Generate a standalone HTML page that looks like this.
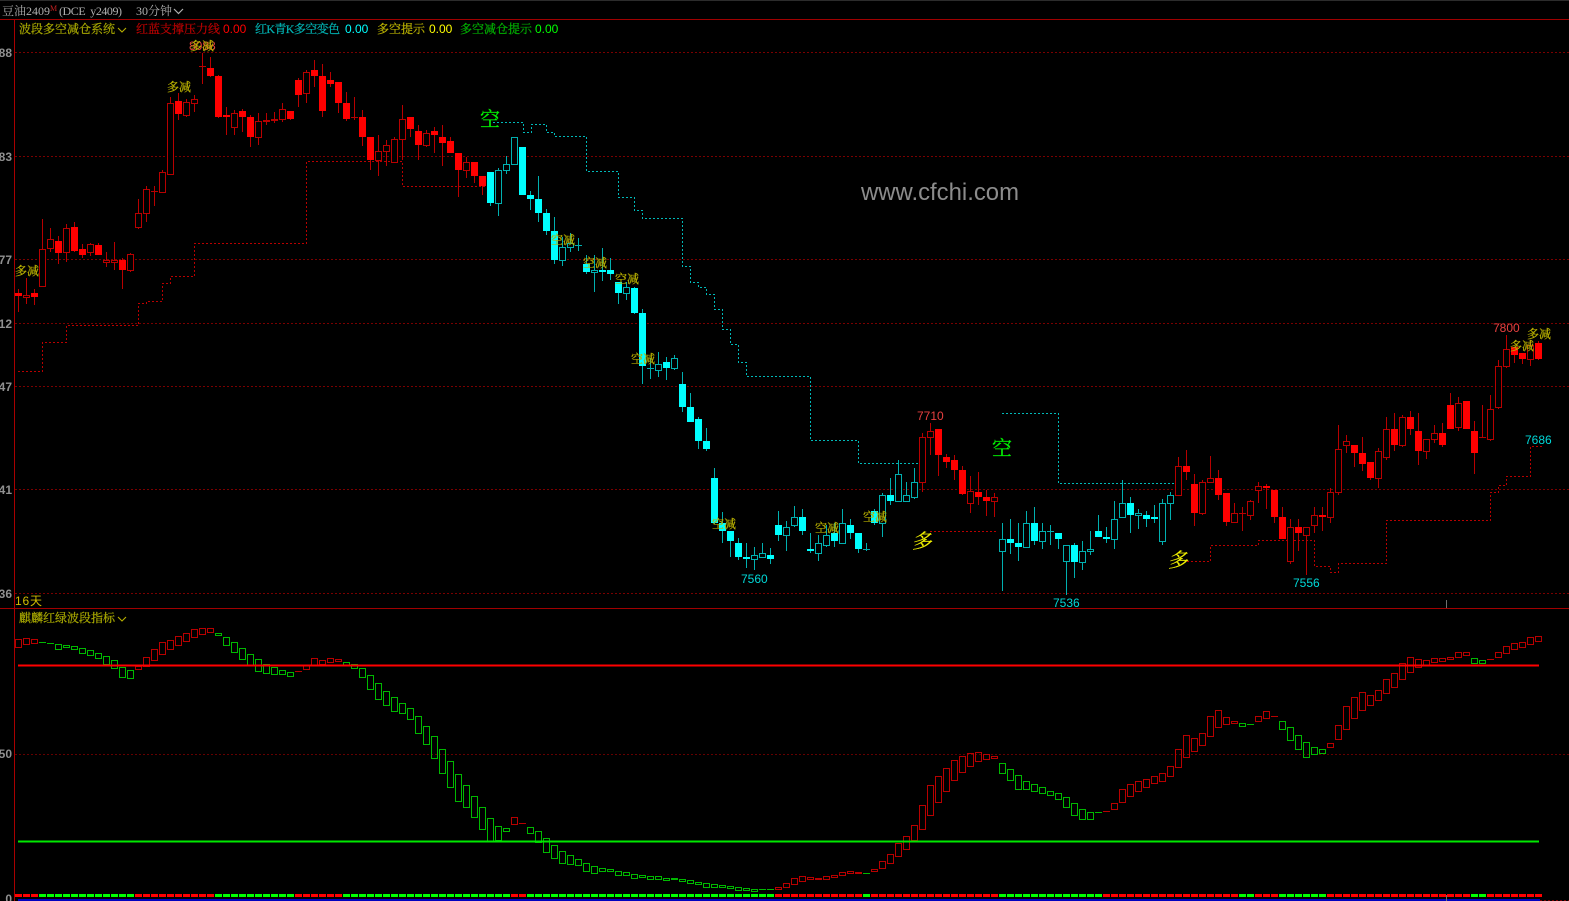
<!DOCTYPE html>
<html lang="zh">
<head>
<meta charset="utf-8">
<title>豆油2409</title>
<style>
html,body{margin:0;padding:0;background:#000;width:1569px;height:901px;overflow:hidden}
svg{display:block;filter:blur(.35px)}
text{font-family:"Liberation Serif","Noto Serif CJK SC",serif;font-size:12px}
.s{font-family:"Liberation Sans","Noto Sans CJK SC",sans-serif}
.ax{font-family:"Liberation Sans",sans-serif;font-size:12px;fill:#909090;font-weight:bold;text-anchor:end}
.j{fill:#b8b000;stroke:#b8b000;stroke-width:.25}
.n{font-family:"Liberation Sans",sans-serif;font-size:12px}
.h{stroke-width:.25}
</style>
</head>
<body>
<svg width="1569" height="901" viewBox="0 0 1569 901" xmlns="http://www.w3.org/2000/svg">
<rect width="1569" height="901" fill="#000"/>
<rect width="1569" height="1" fill="#2c2c2c"/>

<g shape-rendering="crispEdges" fill="none">
<path d="M15 52.5H1569M15 156.5H1569M15 259.5H1569M15 323.5H1569M15 386.5H1569M15 489.5H1569M15 593.5H1569" stroke="#7a0000" stroke-dasharray="2 2"/>
<path d="M15 754.5H1569" stroke="#640000" stroke-dasharray="2 2"/>
<path d="M0 19.5H1569M0 608.5H1569" stroke="#a00000"/>
<path d="M14.5 20V901" stroke="#a80000"/>

<!-- stop lines -->
<path d="M493 122.5H523.5V132.5H531.5V124.5H546.5V132.5H554.5V136.5H586.5V171.5H618.5V197.5H634.5V210.5H642.5V218.5H682.5V266.5H690.5V282.5H698.5V287.5H706.5V294.5H714.5V309.5H722.5V329.5H730.5V344.5H738.5V362.5H746.5V376.5H810.5V440.5H858.5V463.5H920M1002 413.5H1058.5V483.5H1176" stroke="#00b8b8" stroke-dasharray="2 2"/>
<path d="M18 371.5H42.5V342.5H66.5V325.5H138.5V303.5H146.5V301.5H162.5V283.5H170.5V276.5H194.5V243.5H306.5V161.5H402.5V186.5H486M930 531.5H998M1187 561.5H1210.5V545.5H1258.5V540.5H1314.5V566.5H1330.5V572.5H1338.5V563.5H1386.5V520.5H1490.5V492.5H1498.5V485.5H1506.5V476.5H1530.5V446.5H1544" stroke="#b80000" stroke-dasharray="2 2"/>

<!-- wicks -->
<path stroke="#b80000" d="M18.5 289V312M26.5 278V304M34.5 289V305M42.5 219V287M50.5 228V252M58.5 236V264M66.5 224V262M74.5 222V252M82.5 244V258M90.5 243V256M98.5 243V255M106.5 252V267M114.5 242V270M122.5 258V289M130.5 253V272M138.5 199V229M146.5 186V222M154.5 186V206M162.5 170V193M170.5 97V175M178.5 93V120M186.5 99V117M194.5 95V112M202.5 53V84M210.5 57V77M218.5 75V118M226.5 107V135M234.5 110V135M242.5 109V132M250.5 115V147M258.5 113V145M266.5 113V125M274.5 112V123M282.5 103V122M290.5 111V120M298.5 78V107M306.5 70V103M314.5 60V87M322.5 64V117M330.5 72V87M338.5 82V113M346.5 92V121M354.5 97V120M362.5 110V146M370.5 137V170M378.5 135V176M386.5 140V166M394.5 137V163M402.5 105V160M410.5 117V137M418.5 125V160M426.5 130V147M434.5 127V153M442.5 125V166M450.5 137V153M458.5 153V197M466.5 157V178M474.5 162V183M482.5 176V195M922.5 433V492M930.5 423V455M938.5 429V476M946.5 454V468M954.5 455V480M962.5 466V495M970.5 476V513M978.5 472V505M986.5 490V516M994.5 493V517M1178.5 457V495M1186.5 450V480M1194.5 474V526M1202.5 480V515M1210.5 456V482M1218.5 470V500M1226.5 493V526M1234.5 503V523M1242.5 507V531M1250.5 500V520M1258.5 482V503M1266.5 484V509M1274.5 490V523M1282.5 507V539M1290.5 519V564M1298.5 519V551M1306.5 527V575M1314.5 507V533M1322.5 507V531M1330.5 488V523M1338.5 425V495M1346.5 435V453M1354.5 445V467M1362.5 437V471M1370.5 462V480M1378.5 448V488M1386.5 417V460M1394.5 413V451M1402.5 415V447M1410.5 411V435M1418.5 413V465M1426.5 439V459M1434.5 425V443M1442.5 423V447M1450.5 393V429M1458.5 397V431M1474.5 421V474M1482.5 405V437M1490.5 395V441M1498.5 360V409M1506.5 335V368M1514.5 347V363M1522.5 353V364M1530.5 340V366M1538.5 341V360M199 66.5h7M151 191.5h7M351 117.5h7M1239 513.5h7M1479 437.5h7"/>
<path stroke="#00b0b0" d="M490.5 172V206M498.5 168V216M506.5 156V174M514.5 137V164M522.5 147V195M530.5 191V210M538.5 176V222M546.5 209V235M554.5 217V264M562.5 237V266M570.5 233V252M578.5 238V251M586.5 255V274M594.5 255V292M602.5 248V281M610.5 258V280M618.5 282V304M626.5 282V300M634.5 287V314M642.5 309V384M650.5 358V379M658.5 352V377M666.5 357V380M674.5 355V370M682.5 372V412M690.5 393V422M698.5 417V449M706.5 428V451M714.5 468V524M722.5 512V543M730.5 531V557M738.5 538V560M746.5 543V568M754.5 547V570M762.5 543V558M770.5 548V564M778.5 511V541M786.5 521V551M794.5 506V527M802.5 509V535M810.5 533V553M818.5 535V561M826.5 525V547M834.5 523V547M842.5 509V543M850.5 519V539M858.5 533V553M866.5 543V551M874.5 509V525M882.5 493V537M890.5 478V505M898.5 460V501M906.5 482V501M914.5 468V499M1002.5 523V591M1010.5 519V554M1018.5 523V561M1026.5 511V547M1034.5 507V545M1042.5 523V549M1050.5 525V545M1058.5 533V549M1066.5 545V595M1074.5 543V578M1082.5 541V570M1090.5 531V555M1098.5 515V537M1106.5 527V543M1114.5 501V549M1122.5 480V517M1130.5 497V533M1138.5 509V529M1146.5 511V527M1154.5 505V523M1162.5 499V545M1170.5 492V520M575 245.5h7M647 368.5h7M863 549.5h7M1047 531.5h7"/>

<!-- hollow candles -->
<path fill="#000" stroke="#b80000" d="M23.5 295.5h6v2h-6zM39.5 249.5h6v37h-6zM47.5 239.5h6v9h-6zM63.5 228.5h6v24h-6zM87.5 244.5h6v8h-6zM103.5 260.5h6v2h-6zM111.5 260.5h6v2h-6zM127.5 254.5h6v16h-6zM135.5 213.5h6v14h-6zM143.5 189.5h6v24h-6zM159.5 172.5h6v20h-6zM167.5 103.5h6v71h-6zM183.5 102.5h6v13h-6zM191.5 99.5h6v4h-6zM231.5 113.5h6v14h-6zM255.5 121.5h6v16h-6zM263.5 120.5h6v1h-6zM271.5 119.5h6v1h-6zM279.5 109.5h6v10h-6zM303.5 72.5h6v21h-6zM375.5 151.5h6v9h-6zM383.5 145.5h6v6h-6zM391.5 139.5h6v23h-6zM399.5 119.5h6v20h-6zM423.5 133.5h6v12h-6zM463.5 162.5h6v8h-6zM919.5 437.5h6v45h-6zM927.5 431.5h6v6h-6zM967.5 491.5h6v12h-6zM991.5 497.5h6v4h-6zM1175.5 466.5h6v29h-6zM1199.5 482.5h6v31h-6zM1207.5 478.5h6v4h-6zM1231.5 513.5h6v9h-6zM1247.5 501.5h6v14h-6zM1255.5 486.5h6v4h-6zM1287.5 527.5h6v34h-6zM1303.5 527.5h6v8h-6zM1311.5 515.5h6v10h-6zM1327.5 492.5h6v25h-6zM1335.5 449.5h6v43h-6zM1343.5 441.5h6v4h-6zM1375.5 451.5h6v27h-6zM1383.5 429.5h6v28h-6zM1399.5 417.5h6v28h-6zM1423.5 439.5h6v12h-6zM1431.5 433.5h6v6h-6zM1455.5 403.5h6v24h-6zM1487.5 409.5h6v30h-6zM1495.5 366.5h6v41h-6zM1503.5 349.5h6v17h-6zM1527.5 345.5h6v14h-6z"/>
<path fill="#000" stroke="#00b0b0" d="M495.5 170.5h6v33h-6zM503.5 164.5h6v6h-6zM511.5 137.5h6v27h-6zM559.5 247.5h6v13h-6zM567.5 243.5h6v4h-6zM591.5 270.5h6v2h-6zM623.5 287.5h6v6h-6zM655.5 364.5h6v6h-6zM671.5 358.5h6v10h-6zM751.5 555.5h6v4h-6zM759.5 553.5h6v4h-6zM783.5 527.5h6v8h-6zM791.5 517.5h6v8h-6zM815.5 543.5h6v10h-6zM823.5 535.5h6v10h-6zM839.5 523.5h6v20h-6zM879.5 495.5h6v28h-6zM895.5 474.5h6v27h-6zM903.5 495.5h6v6h-6zM911.5 482.5h6v15h-6zM999.5 539.5h6v12h-6zM1023.5 523.5h6v24h-6zM1039.5 531.5h6v10h-6zM1063.5 545.5h6v16h-6zM1079.5 551.5h6v11h-6zM1087.5 549.5h6v2h-6zM1111.5 519.5h6v20h-6zM1119.5 503.5h6v14h-6zM1135.5 513.5h6v2h-6zM1159.5 503.5h6v38h-6zM1167.5 495.5h6v8h-6z"/>

<!-- filled candles -->
<path fill="#ff0000" d="M15 293h7v3h-7zM31 293h7v4h-7zM55 241h7v12h-7zM71 227h7v24h-7zM79 249h7v6h-7zM95 245h7v10h-7zM119 260h7v10h-7zM175 101h7v13h-7zM207 68h7v8h-7zM215 76h7v41h-7zM223 115h7v2h-7zM239 111h7v6h-7zM247 117h7v20h-7zM287 111h7v8h-7zM295 80h7v15h-7zM311 70h7v6h-7zM319 76h7v35h-7zM327 80h7v4h-7zM335 82h7v21h-7zM343 103h7v16h-7zM359 117h7v20h-7zM367 137h7v23h-7zM407 117h7v12h-7zM415 131h7v14h-7zM431 131h7v4h-7zM439 137h7v6h-7zM447 141h7v12h-7zM455 153h7v17h-7zM471 162h7v14h-7zM479 176h7v10h-7zM935 429h7v26h-7zM943 457h7v5h-7zM951 460h7v10h-7zM959 470h7v24h-7zM975 492h7v5h-7zM983 497h7v4h-7zM1183 466h7v6h-7zM1191 484h7v29h-7zM1215 478h7v17h-7zM1223 493h7v29h-7zM1263 486h7v2h-7zM1271 490h7v27h-7zM1279 517h7v22h-7zM1295 527h7v6h-7zM1319 515h7v2h-7zM1351 445h7v8h-7zM1359 453h7v11h-7zM1367 462h7v16h-7zM1391 429h7v16h-7zM1407 417h7v12h-7zM1415 431h7v20h-7zM1439 433h7v12h-7zM1447 405h7v24h-7zM1463 401h7v28h-7zM1471 431h7v22h-7zM1511 347h7v8h-7zM1519 353h7v6h-7zM1535 343h7v16h-7z"/>
<path fill="#00ffff" d="M487 172h7v31h-7zM519 147h7v48h-7zM527 195h7v4h-7zM535 199h7v14h-7zM543 213h7v18h-7zM551 231h7v29h-7zM583 264h7v8h-7zM599 270h7v2h-7zM607 270h7v4h-7zM615 282h7v11h-7zM631 288h7v25h-7zM639 313h7v53h-7zM663 362h7v6h-7zM679 384h7v23h-7zM687 407h7v15h-7zM695 419h7v22h-7zM703 441h7v8h-7zM711 478h7v45h-7zM719 523h7v8h-7zM727 531h7v10h-7zM735 543h7v14h-7zM743 557h7v2h-7zM767 555h7v4h-7zM775 525h7v10h-7zM799 517h7v14h-7zM807 549h7v2h-7zM831 533h7v8h-7zM847 525h7v8h-7zM855 533h7v16h-7zM871 511h7v12h-7zM887 495h7v6h-7zM1007 539h7v4h-7zM1015 543h7v4h-7zM1031 523h7v18h-7zM1055 533h7v6h-7zM1071 545h7v17h-7zM1095 531h7v6h-7zM1103 537h7v2h-7zM1127 503h7v12h-7zM1143 515h7v4h-7zM1151 517h7v2h-7z"/>

<!-- lower panel boxes -->
<path stroke="#b80000" d="M15.5 639.5h6v8h-6zM23.5 638.5h6v6h-6zM31.5 639.5h6v4h-6zM135.5 666.5h6v3h-6zM143.5 657.5h6v9h-6zM151.5 649.5h6v11h-6zM159.5 642.5h6v12h-6zM167.5 640.5h6v9h-6zM175.5 636.5h6v9h-6zM183.5 633.5h6v8h-6zM191.5 629.5h6v8h-6zM199.5 628.5h6v6h-6zM207.5 628.5h6v4h-6zM295 671.5h7M303.5 665.5h6v4h-6zM311.5 658.5h6v7h-6zM319.5 660.5h6v4h-6zM327.5 658.5h6v4h-6zM335.5 659.5h6v2h-6zM511.5 817.5h6v7h-6zM519 823.5h7M775.5 887.5h6v2h-6zM783.5 883.5h6v4h-6zM791.5 878.5h6v6h-6zM799.5 876.5h6v5h-6zM807.5 877.5h6v2h-6zM815.5 878.5h6v1h-6zM823.5 876.5h6v3h-6zM831.5 875.5h6v2h-6zM839.5 872.5h6v3h-6zM847.5 871.5h6v2h-6zM855.5 872.5h6v1h-6zM871.5 869.5h6v2h-6zM879.5 861.5h6v7h-6zM887.5 854.5h6v9h-6zM895.5 843.5h6v13h-6zM903.5 836.5h6v13h-6zM911.5 825.5h6v15h-6zM919.5 805.5h6v24h-6zM927.5 785.5h6v30h-6zM935.5 776.5h6v26h-6zM943.5 768.5h6v23h-6zM951.5 760.5h6v20h-6zM959.5 756.5h6v16h-6zM967.5 753.5h6v13h-6zM975.5 752.5h6v9h-6zM983.5 754.5h6v5h-6zM991.5 756.5h6v2h-6zM1103 811.5h7M1111.5 803.5h6v6h-6zM1119.5 789.5h6v13h-6zM1127.5 784.5h6v12h-6zM1135.5 781.5h6v10h-6zM1143.5 779.5h6v8h-6zM1151.5 776.5h6v7h-6zM1159.5 773.5h6v8h-6zM1167.5 766.5h6v10h-6zM1175.5 749.5h6v18h-6zM1183.5 735.5h6v22h-6zM1191.5 738.5h6v13h-6zM1199.5 733.5h6v12h-6zM1207.5 716.5h6v20h-6zM1215.5 710.5h6v17h-6zM1223.5 717.5h6v7h-6zM1231.5 721.5h6v2h-6zM1255.5 716.5h6v5h-6zM1263.5 711.5h6v7h-6zM1271 716.5h7M1327.5 743.5h6v4h-6zM1335.5 725.5h6v14h-6zM1343.5 706.5h6v23h-6zM1351.5 697.5h6v21h-6zM1359.5 692.5h6v18h-6zM1367.5 695.5h6v10h-6zM1375.5 690.5h6v10h-6zM1383.5 679.5h6v14h-6zM1391.5 673.5h6v14h-6zM1399.5 663.5h6v16h-6zM1407.5 657.5h6v15h-6zM1415.5 659.5h6v8h-6zM1423.5 660.5h6v5h-6zM1431.5 658.5h6v4h-6zM1439.5 658.5h6v3h-6zM1447.5 657.5h6v2h-6zM1455.5 652.5h6v5h-6zM1463.5 652.5h6v3h-6zM1487 659.5h7M1495.5 652.5h6v5h-6zM1503.5 646.5h6v7h-6zM1511.5 643.5h6v6h-6zM1519.5 642.5h6v5h-6zM1527.5 637.5h6v7h-6zM1535.5 636.5h6v5h-6z"/>
<path stroke="#00b800" d="M39 642.5h7M47 643.5h7M55.5 644.5h6v5h-6zM63.5 645.5h6v2h-6zM71.5 646.5h6v3h-6zM79.5 648.5h6v5h-6zM87.5 650.5h6v5h-6zM95.5 653.5h6v5h-6zM103.5 656.5h6v8h-6zM111.5 660.5h6v8h-6zM119.5 667.5h6v10h-6zM127.5 670.5h6v8h-6zM215.5 633.5h6v2h-6zM223.5 637.5h6v8h-6zM231.5 642.5h6v10h-6zM239.5 648.5h6v11h-6zM247.5 654.5h6v11h-6zM255.5 659.5h6v12h-6zM263.5 664.5h6v9h-6zM271.5 667.5h6v7h-6zM279.5 670.5h6v4h-6zM287.5 672.5h6v4h-6zM343.5 662.5h6v3h-6zM351.5 664.5h6v4h-6zM359.5 668.5h6v9h-6zM367.5 675.5h6v14h-6zM375.5 683.5h6v16h-6zM383.5 691.5h6v14h-6zM391.5 697.5h6v14h-6zM399.5 703.5h6v10h-6zM407.5 708.5h6v11h-6zM415.5 716.5h6v17h-6zM423.5 726.5h6v18h-6zM431.5 736.5h6v22h-6zM439.5 749.5h6v24h-6zM447.5 761.5h6v26h-6zM455.5 774.5h6v27h-6zM463.5 785.5h6v22h-6zM471.5 796.5h6v21h-6zM479.5 807.5h6v22h-6zM487.5 818.5h6v23h-6zM495.5 826.5h6v14h-6zM503.5 828.5h6v3h-6zM527.5 827.5h6v6h-6zM535.5 831.5h6v11h-6zM543.5 838.5h6v14h-6zM551.5 845.5h6v13h-6zM559.5 851.5h6v12h-6zM567.5 855.5h6v9h-6zM575.5 859.5h6v6h-6zM583.5 863.5h6v8h-6zM591.5 866.5h6v7h-6zM599.5 868.5h6v3h-6zM607.5 869.5h6v2h-6zM615.5 871.5h6v4h-6zM623.5 872.5h6v3h-6zM631.5 874.5h6v4h-6zM639.5 875.5h6v2h-6zM647.5 876.5h6v3h-6zM655.5 876.5h6v3h-6zM663.5 878.5h6v2h-6zM671.5 878.5h6v1h-6zM679.5 879.5h6v2h-6zM687.5 880.5h6v3h-6zM695.5 882.5h6v2h-6zM703.5 883.5h6v4h-6zM711.5 884.5h6v3h-6zM719.5 885.5h6v2h-6zM727.5 886.5h6v2h-6zM735.5 887.5h6v3h-6zM743.5 888.5h6v2h-6zM751.5 889.5h6v2h-6zM759 889.5h7M767 889.5h7M863 873.5h7M999.5 763.5h6v10h-6zM1007.5 769.5h6v11h-6zM1015.5 775.5h6v14h-6zM1023.5 781.5h6v8h-6zM1031.5 784.5h6v7h-6zM1039.5 787.5h6v6h-6zM1047.5 791.5h6v4h-6zM1055.5 793.5h6v6h-6zM1063.5 797.5h6v10h-6zM1071.5 803.5h6v12h-6zM1079.5 809.5h6v10h-6zM1087.5 812.5h6v7h-6zM1095 812.5h7M1239.5 723.5h6v3h-6zM1247 724.5h7M1279.5 721.5h6v8h-6zM1287.5 727.5h6v13h-6zM1295.5 735.5h6v14h-6zM1303.5 742.5h6v15h-6zM1311.5 747.5h6v7h-6zM1319.5 749.5h6v4h-6zM1471.5 658.5h6v5h-6zM1479.5 660.5h6v3h-6z"/>

<!-- indicator horizontal lines -->
<rect x="18" y="664.5" width="1521" height="2" fill="#ff0000" stroke="none"/>
<rect x="18" y="840.5" width="1521" height="2" fill="#00e800" stroke="none"/>

<!-- bottom strip -->
<path stroke="#ff0000" stroke-width="3" stroke-dasharray="7 1" d="M15 895.5h24M135 895.5h80M295 895.5h48M511 895.5h16M775 895.5h88M871 895.5h128M1103 895.5h136M1255 895.5h24M1327 895.5h144M1487 895.5h56"/>
<path stroke="#00ff00" stroke-width="3" stroke-dasharray="7 1" d="M39 895.5h96M215 895.5h80M343 895.5h168M527 895.5h248M863 895.5h8M999 895.5h104M1239 895.5h16M1279 895.5h48M1471 895.5h16"/>
<rect x="18" y="899" width="1522" height="2" fill="#0000c0" stroke="none"/>
<path d="M1540 900.5H1569" stroke="#7a0000" stroke-dasharray="2 2"/>
<path d="M1446.5 600V608M1446.5 895V901" stroke="#707070"/>
</g>

<!-- header -->
<text x="2" y="15" fill="#b0b0b0">豆油</text>
<text x="26" y="15" fill="#b0b0b0" textLength="24" lengthAdjust="spacingAndGlyphs">2409</text>
<text x="50" y="11" fill="#c02020" style="font-size:8px">M</text>
<text x="59" y="15" fill="#b0b0b0" textLength="63" lengthAdjust="spacing" xml:space="preserve">(DCE  y2409)</text>
<text x="136" y="15" fill="#b0b0b0">30分钟</text>
<path d="M174 9l4.5 4.5 4.5-4.5" fill="none" stroke="#b0b0b0" stroke-width="1.2"/>

<!-- legend -->
<text x="19" y="33" class="h" fill="#a8a800" stroke="#a8a800">波段多空减仓系统</text>
<path d="M118 28l4 4 4-4" fill="none" stroke="#b8b000" stroke-width="1.1"/>
<text x="136" y="33" class="h" fill="#b80000" stroke="#b80000">红蓝支撑压力线</text>
<text x="223" y="33" class="n" fill="#ff0000">0.00</text>
<text x="255" y="33" class="h" fill="#00b0b0" stroke="#00b0b0" textLength="85" lengthAdjust="spacing">红K青K多空变色</text>
<text x="345" y="33" class="n" fill="#00ffff">0.00</text>
<text x="377" y="33" class="h" fill="#b8b000" stroke="#b8b000">多空提示</text>
<text x="429" y="33" class="n" fill="#ffff00">0.00</text>
<text x="460" y="33" class="h" fill="#00b000" stroke="#00b000">多空减仓提示</text>
<text x="535" y="33" class="n" fill="#00ff00">0.00</text>

<!-- y axis -->
<text x="12" y="57" class="ax">88</text>
<text x="12" y="161" class="ax">83</text>
<text x="12" y="264" class="ax">77</text>
<text x="12" y="328" class="ax">12</text>
<text x="12" y="391" class="ax">47</text>
<text x="12" y="494" class="ax">41</text>
<text x="12" y="598" class="ax">36</text>
<text x="12" y="758" class="ax">50</text>
<text x="12" y="903" class="ax">0</text>

<text x="15" y="605" class="n" fill="#d0bc00" textLength="27" lengthAdjust="spacing">16天</text>
<text x="19" y="622" class="h" fill="#a8a800" stroke="#a8a800">麒麟红绿波段指标</text>
<path d="M118 617l4 4 4-4" fill="none" stroke="#b8b000" stroke-width="1.1"/>

<!-- watermark -->
<text x="861" y="200" class="s" fill="#8c8c8c" style="font-size:24px" textLength="158" lengthAdjust="spacingAndGlyphs">www.cfchi.com</text>

<!-- price labels -->
<text x="189" y="50" class="n" fill="#e84040">8088</text>
<text x="190" y="50" class="j">多减</text>
<text x="917" y="420" class="n" fill="#e84040">7710</text>
<text x="741" y="583" class="n" fill="#00d8d8">7560</text>
<text x="1053" y="607" class="n" fill="#00d8d8">7536</text>
<text x="1293" y="587" class="n" fill="#00d8d8">7556</text>
<text x="1493" y="332" class="n" fill="#e84040">7800</text>
<text x="1525" y="444" class="n" fill="#00d8d8">7686</text>

<!-- reduce markers -->
<text x="167" y="91" class="j">多减</text>
<text x="15" y="275" class="j">多减</text>
<text x="1510" y="350" class="j">多减</text>
<text x="1527" y="338" class="j">多减</text>
<text x="551" y="244" class="j">空减</text>
<text x="583" y="267" class="j">空减</text>
<text x="615" y="283" class="j">空减</text>
<text x="631" y="363" class="j">空减</text>
<text x="712" y="528" class="j">空减</text>
<text x="815" y="532" class="j">空减</text>
<text x="863" y="521" class="j">空减</text>

<!-- big signals -->
<text x="480" y="126" fill="#00f000" stroke="#00f000" class="h" style="font-size:20px">空</text>
<text x="992" y="455" fill="#00f000" stroke="#00f000" class="h" style="font-size:20px">空</text>
<text transform="translate(912,548) skewX(-10)" fill="#f0f000" stroke="#f0f000" class="h" style="font-size:20px">多</text>
<text transform="translate(1168,567) skewX(-10)" fill="#f0f000" stroke="#f0f000" class="h" style="font-size:20px">多</text>
</svg>
</body>
</html>
